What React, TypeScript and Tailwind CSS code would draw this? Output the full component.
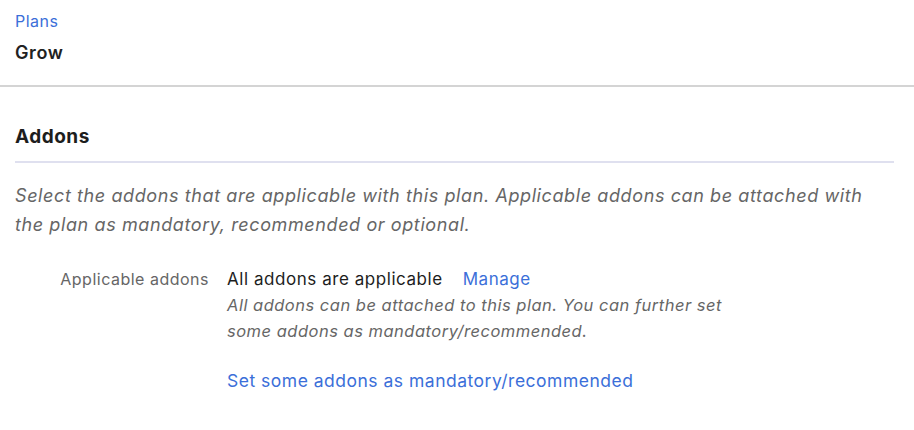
export default function App() {
  return (
    <div className="w-[914px] h-[430px] bg-white overflow-hidden" style={{ fontFamily: 'Inter, "Noto Sans", sans-serif' }}>
      <div className="px-[15px] pt-[10px] pb-[20px] border-b-2 border-[#d4d4d4]">
        <div className="text-[16px] leading-[22px] tracking-[0.5px] text-[#3b6fd9]">Plans</div>
        <div className="mt-[9px] text-[18px] leading-[24px] tracking-[0.6px] font-semibold text-[#222]">Grow</div>
      </div>
      <div className="px-[15px]">
        <div className="mt-[37px] pb-[12px] border-b-2 border-[#dfe0ef] w-[879px]">
          <div className="text-[19px] leading-[25px] tracking-[0.5px] font-bold text-[#1d1d1d]">Addons</div>
        </div>
        <p className="mt-[18px] w-[870px] text-[18px] leading-[29px] italic text-[#666] tracking-[0.6px]">
          Select the addons that are applicable with this plan. Applicable addons can be attached with the plan as mandatory, recommended or optional.
        </p>
        <div className="mt-[27px] flex">
          <div className="w-[212px] text-right pr-[18px] text-[16px] leading-[26px] tracking-[0.5px] text-[#666]">Applicable addons</div>
          <div>
            <div className="flex text-[17px] leading-[26px] tracking-[0.55px]">
              <span className="text-[#1d1d1d]">All addons are applicable</span>
              <span className="ml-[20px] text-[#3b6fd9]">Manage</span>
            </div>
            <div className="text-[16.5px] leading-[26px] italic text-[#666] tracking-[0.5px] w-[515px]">
              All addons can be attached to this plan. You can further set some addons as mandatory/recommended.
            </div>
            <div className="mt-[24px] text-[17.5px] leading-[26px] tracking-[0.5px] text-[#3b6fd9]">Set some addons as mandatory/recommended</div>
          </div>
        </div>
      </div>
    </div>
  );
}
